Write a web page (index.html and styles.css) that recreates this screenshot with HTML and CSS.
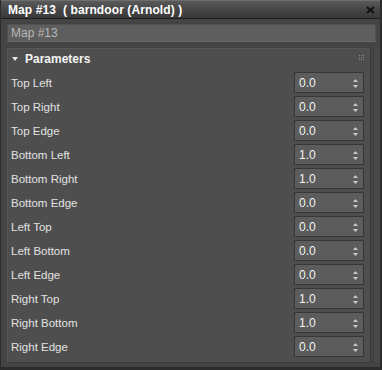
FILE: index.html
```html
<!DOCTYPE html>
<html lang="en">
<head>
  <meta charset="UTF-8" />
  <title>Map #13</title>
  <link rel="stylesheet" href="styles.css">
</head>
<body>
  <div class="window">
    <header class="titlebar">
      <span class="title">Map #13&nbsp; ( barndoor (Arnold) )</span>
      <svg class="close" width="9" height="8" viewBox="0 0 9 8">
        <path d="M1 1 L8 7 M8 1 L1 7" stroke="#111" stroke-width="2.2" />
      </svg>
    </header>

    <div class="content">
      <div class="name-field">Map #13</div>

      <div class="rollout-area">
        <section class="panel">
          <div class="panel-header">
            <span class="arrow"></span>
            <span class="panel-title">Parameters</span>
            <span class="grip"><i></i><i></i><i></i><i></i><i></i><i></i><i></i><i></i><i></i></span>
          </div>

          <div class="rows" id="rows"></div>
        </section>
        <div class="scroll-track"></div>
      </div>
    </div>
  </div>

  <script>
    const params = [
      ["Top Left", "0.0"],
      ["Top Right", "0.0"],
      ["Top Edge", "0.0"],
      ["Bottom Left", "1.0"],
      ["Bottom Right", "1.0"],
      ["Bottom Edge", "0.0"],
      ["Left Top", "0.0"],
      ["Left Bottom", "0.0"],
      ["Left Edge", "0.0"],
      ["Right Top", "1.0"],
      ["Right Bottom", "1.0"],
      ["Right Edge", "0.0"]
    ];

    const rows = document.getElementById("rows");
    params.forEach(([label, value]) => {
      const row = document.createElement("div");
      row.className = "row";
      row.innerHTML = `
        <span class="label">${label}</span>
        <div class="spinner">
          <span class="value">${value}</span>
          <span class="spin-arrows">
            <svg width="5" height="9" viewBox="0 0 5 9">
              <path d="M2.5 0 L5 3 L0 3 Z M0 6 L5 6 L2.5 9 Z" fill="#c8c8c8" />
            </svg>
          </span>
        </div>
      `;
      rows.appendChild(row);
    });
  </script>
</body>
</html>
```

FILE: styles.css
```css
body {
  margin: 0;
  padding: 0;
  background-color: #444444;
  font-family: "Liberation Sans", Arial, sans-serif;
  font-size: 12px;
}

.window {
  width: 382px;
  height: 370px;
  box-sizing: border-box;
  display: flex;
  flex-direction: column;
  background-color: #444444;
  border-left: 1px solid #2c2c2c;
  border-right: 2px solid #2c2c2c;
  border-bottom: 3px solid #2c2c2c;
}

.titlebar {
  height: 19px;
  box-sizing: border-box;
  display: flex;
  align-items: center;
  justify-content: space-between;
  padding: 0 5px 0 7px;
  background: linear-gradient(#5a5a5a, #444444 55%, #3a3a3a);
  border-top: 1px solid #6e6e6e;
  border-bottom: 1px solid #1e1e1e;
}

.title {
  color: #ffffff;
  font-weight: bold;
  font-size: 12px;
  letter-spacing: 0.1px;
}

.close {
  margin-top: 1px;
}

.content {
  flex: 1;
  display: flex;
  flex-direction: column;
  padding: 5px 0 4px 6px;
  gap: 6px;
}

.name-field {
  height: 18px;
  box-sizing: border-box;
  margin-right: 4px;
  padding: 2px 3px;
  background-color: #5e5e5e;
  border: 1px solid #505050;
  border-bottom-color: #6a6a6a;
  color: #b8b8b8;
  font-size: 12px;
  line-height: 13px;
}

.rollout-area {
  flex: 1;
  display: flex;
  gap: 2px;
}

.panel {
  flex: 1;
  box-sizing: border-box;
  background-color: #4e4e4e;
  border: 1px solid #575757;
  border-radius: 2px;
  border-bottom-color: #3c3c3c;
  border-right-color: #3c3c3c;
}

.panel-header {
  height: 19px;
  display: flex;
  align-items: center;
  padding: 0 6px 0 4px;
  gap: 7px;
}

.arrow {
  width: 0;
  height: 0;
  border-left: 3.5px solid transparent;
  border-right: 3.5px solid transparent;
  border-top: 4px solid #e8e8e8;
  margin-top: 1px;
}

.panel-title {
  flex: 1;
  color: #f4f4f4;
  font-weight: bold;
  font-size: 12px;
}

.grip {
  display: grid;
  grid-template-columns: repeat(3, 1px);
  gap: 1px;
  margin-top: -2px;
}

.grip i {
  width: 1px;
  height: 1px;
  background-color: #8a8a8a;
}

.rows {
  display: flex;
  flex-direction: column;
  gap: 3px;
  padding: 4px 6px 0 3px;
}

.row {
  height: 21px;
  display: flex;
  align-items: center;
  justify-content: space-between;
}

.label {
  color: #e2e2e2;
  font-size: 11.5px;
}

.spinner {
  width: 70px;
  height: 21px;
  box-sizing: border-box;
  display: flex;
  align-items: center;
  justify-content: space-between;
  padding: 1px 5px 0 4px;
  background-color: #5c5c5c;
  border: 1px solid #363636;
}

.value {
  color: #f2f2f2;
  font-size: 12px;
}

.spin-arrows {
  display: flex;
}

.scroll-track {
  width: 6px;
  background-color: #484848;
  border-left: 1px solid #3e3e3e;
}
```
